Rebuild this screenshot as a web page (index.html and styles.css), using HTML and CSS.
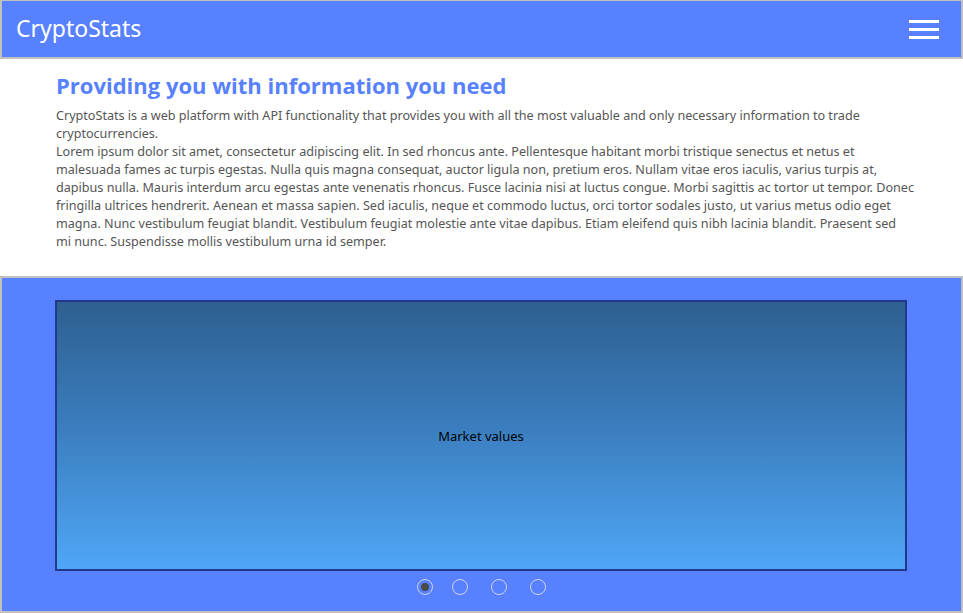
FILE: index.html
```html
<!DOCTYPE html>
<html lang="en">
<head>
<meta charset="utf-8">
<title>CryptoStats</title>
<link rel="stylesheet" href="styles.css">
</head>
<body>
<header class="topbar">
  <div class="brand">CryptoStats</div>
  <button class="menu" aria-label="Menu">
    <span class="bar"></span><span class="bar"></span><span class="bar"></span>
  </button>
</header>
<section class="intro">
  <h1 class="intro-title">Providing you with information you need</h1>
  <p class="intro-text">CryptoStats is a web platform with API functionality that provides you with all the most valuable and only necessary information to trade cryptocurrencies.<br>Lorem ipsum dolor sit amet, consectetur adipiscing elit. In sed rhoncus ante. Pellentesque habitant morbi tristique senectus et netus et malesuada fames ac turpis egestas. Nulla quis magna consequat, auctor ligula non, pretium eros. Nullam vitae eros iaculis, varius turpis at, dapibus nulla. Mauris interdum arcu egestas ante venenatis rhoncus. Fusce lacinia nisi at luctus congue. Morbi sagittis ac tortor ut tempor. Donec fringilla ultrices hendrerit. Aenean et massa sapien. Sed iaculis, neque et commodo luctus, orci tortor sodales justo, ut varius metus odio eget magna. Nunc vestibulum feugiat blandit. Vestibulum feugiat molestie ante vitae dapibus. Etiam eleifend quis nibh lacinia blandit. Praesent sed <span class="nowrap">mi nunc.</span> Suspendisse mollis vestibulum urna id semper.</p>
</section>
<section class="slider">
  <div class="slide">Market values</div>
  <div class="dots">
    <span class="dot dot-active"></span>
    <span class="dot"></span>
    <span class="dot"></span>
    <span class="dot"></span>
  </div>
</section>
</body>
</html>
```
FILE: styles.css
```css
* { box-sizing: border-box; }
html, body { margin: 0; padding: 0; background: #fff; }
body { font-family: "Noto Sans", "Open Sans", sans-serif; width: 963px; height: 613px; overflow: hidden; }

.topbar {
  height: 59px;
  background: #5781ff;
  border: 2px solid #c0c0c0;
  border-top-width: 1px;
  display: flex;
  align-items: center;
  justify-content: space-between;
  padding: 0 22px 0 14px;
}
.brand { color: #fff; font-size: 23px; line-height: 1; padding-bottom: 2px; }
.menu {
  background: none; border: 0; padding: 0; margin: 0;
  width: 30px; display: flex; flex-direction: column; gap: 5px;
  cursor: pointer;
}
.bar { display: block; height: 3px; background: #fff; width: 30px; }

.intro { padding: 12px 43px 0 56px; height: 217px; }
.intro-title {
  margin: 0; color: #5781ff; font-size: 22px; line-height: 28px; font-weight: 700;
  font-family: "Open Sans", "Noto Sans", sans-serif;
}
.intro-text {
  margin: 8px 0 0; color: #555; font-size: 12.6px; line-height: 18px;
}
.nowrap { white-space: nowrap; }

.slider {
  height: 337px;
  background: #5781ff;
  border: 2px solid #c0c0c0;
  padding: 22px 54px 0 53px;
}
.slide {
  height: 271px;
  border: 2px solid #1f3a8c;
  background: linear-gradient(to bottom, #2e6090 0%, #3a7cbc 45%, #4fa6f6 100%);
  display: flex; align-items: center; justify-content: center;
  font-size: 13px; color: #000;
}
.dots { display: flex; justify-content: center; gap: 23px; margin-top: 8px; }
.dot {
  width: 16px; height: 16px; border-radius: 50%;
  border: 1px solid #d0d4e8;
  display: flex; align-items: center; justify-content: center;
}
.dot-active { margin-right: -4px; }
.dot-active::after { content: ""; width: 8px; height: 8px; border-radius: 50%; background: #4a4a4a; }
```
